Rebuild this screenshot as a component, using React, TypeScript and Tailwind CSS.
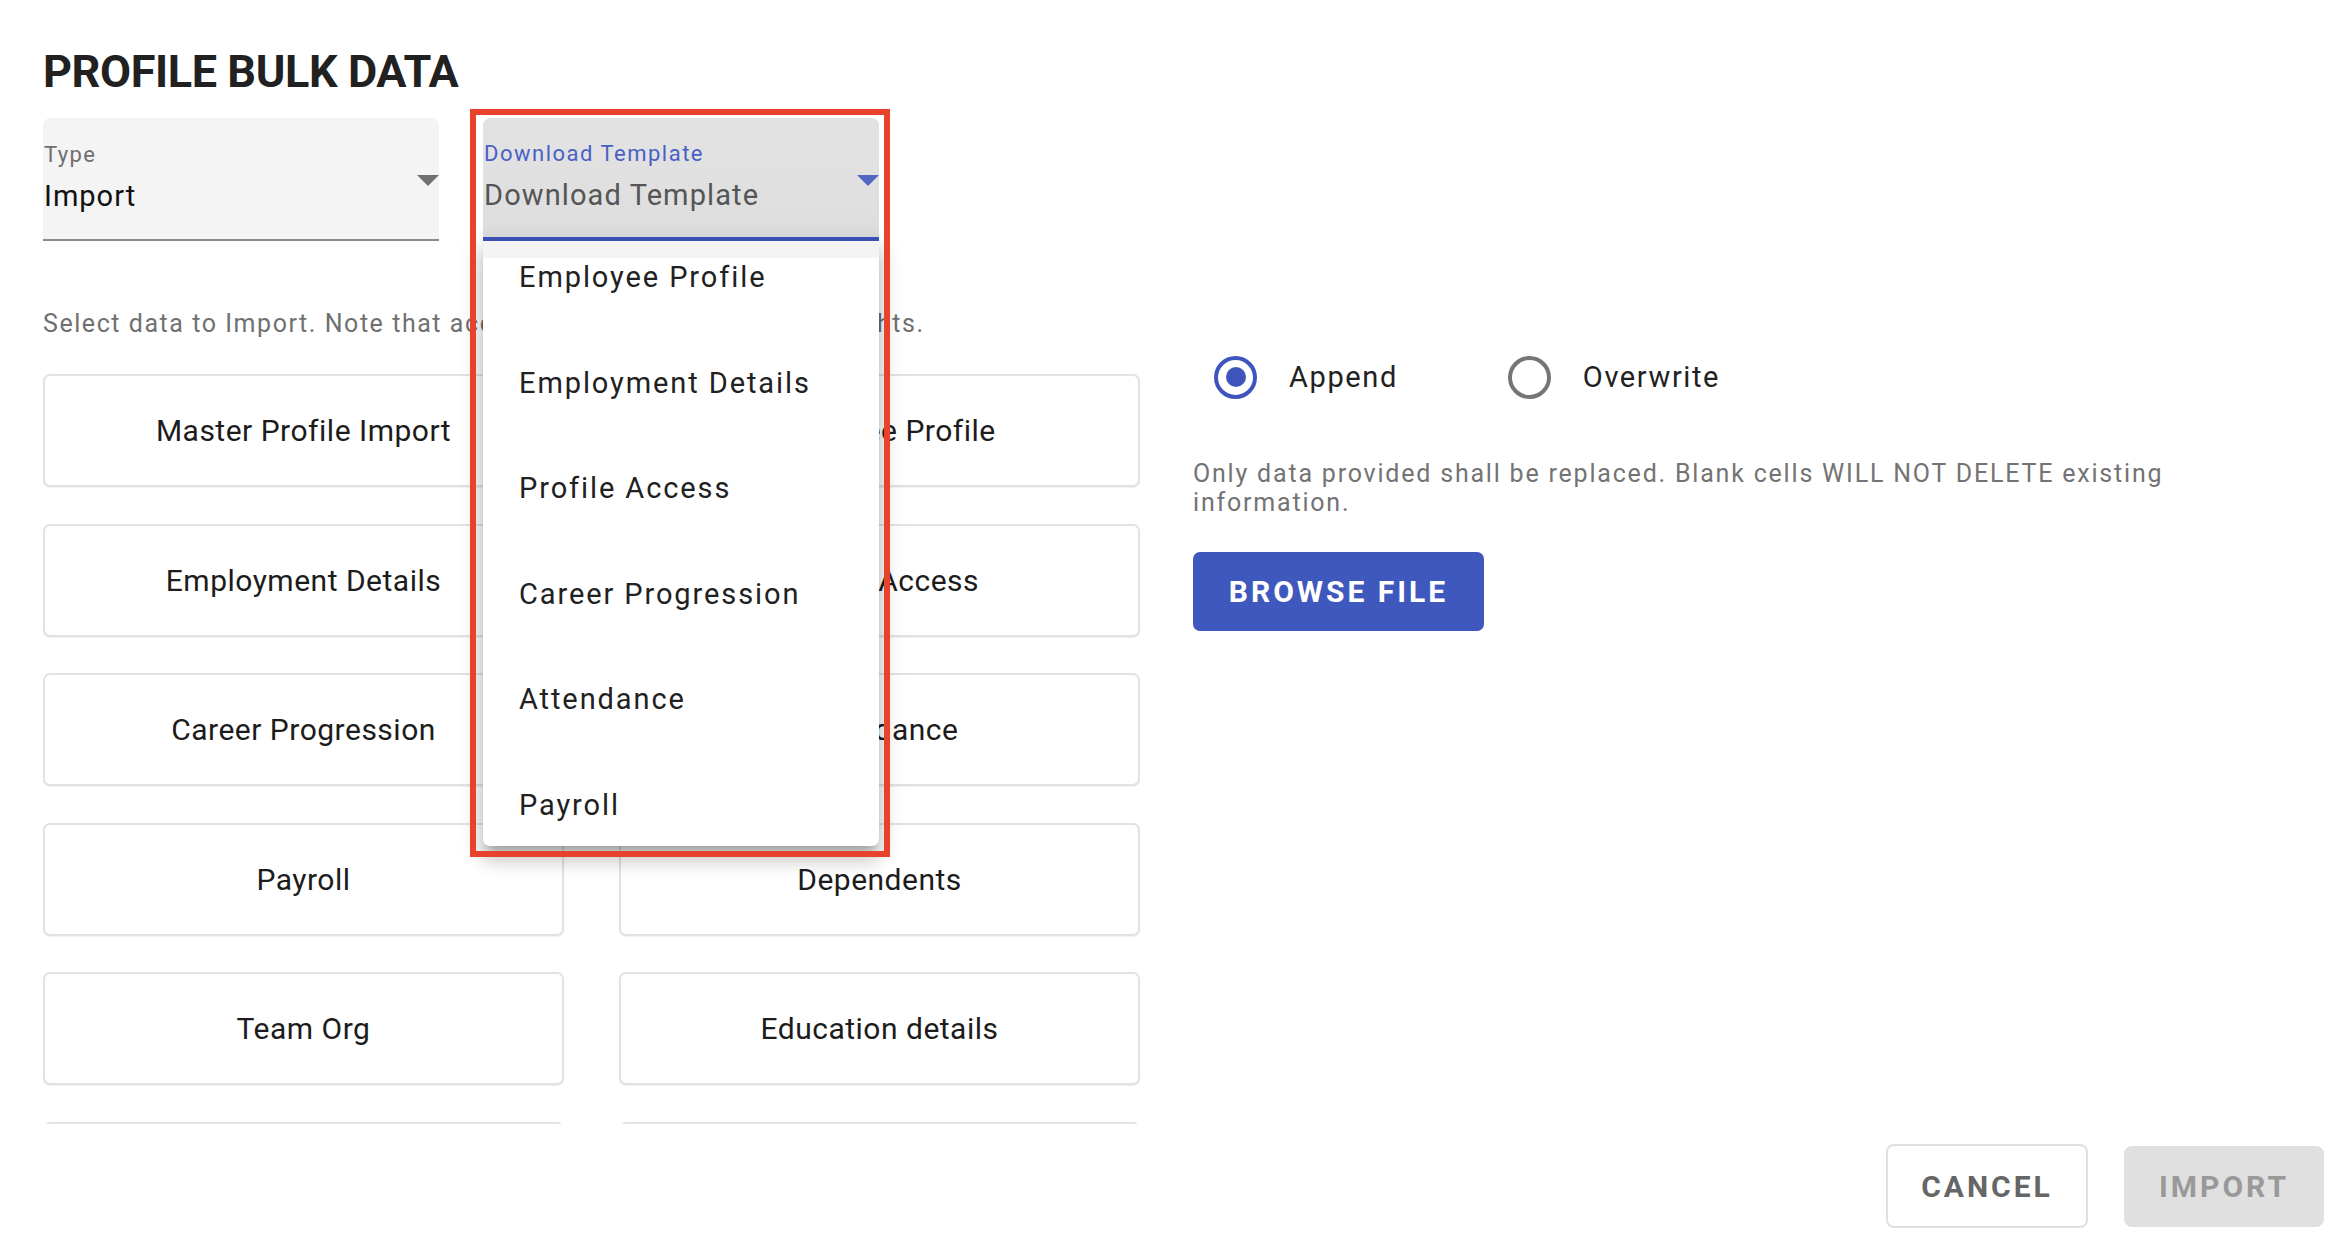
import { useState } from "react";

const cards = [
  "Master Profile Import",
  "Employee Profile",
  "Employment Details",
  "Profile Access",
  "Career Progression",
  "Attendance",
  "Payroll",
  "Dependents",
  "Team Org",
  "Education details",
  "",
  "",
];

const templates = [
  "Employee Profile",
  "Employment Details",
  "Profile Access",
  "Career Progression",
  "Attendance",
  "Payroll",
];

function Caret({ color }: { color: string }) {
  return (
    <svg width="22" height="11" viewBox="0 0 22 11" className="absolute right-0 top-[57px]">
      <polygon points="0,0 22,0 11,11" fill={color} />
    </svg>
  );
}

function Radio({ checked, label }: { checked: boolean; label: string }) {
  return (
    <label className="flex items-center">
      <span
        className={`flex h-[43px] w-[43px] items-center justify-center rounded-full border-[4px] ${
          checked ? "border-[#3f55bd]" : "border-[#757575]"
        }`}
      >
        {checked && <span className="h-[20px] w-[20px] rounded-full bg-[#3f55bd]" />}
      </span>
      <span className="ml-[32px] text-[29px] leading-[34px] tracking-[1.6px] text-[#212121]">{label}</span>
    </label>
  );
}

export default function App() {
  const [mode, setMode] = useState("append");

  return (
    <div className="relative h-[1240px] w-[2336px] overflow-hidden bg-white font-['Roboto',sans-serif]">
      <div className="pl-[43px] pt-[49px]">
        <h1 className="text-[45px] font-bold leading-[46px] tracking-[-0.4px] text-[#212121]">PROFILE BULK DATA</h1>

        <div className="mt-[23px] flex gap-[44px]">
          {/* Type select */}
          <div className="relative h-[123px] w-[396px] rounded-t-[7px] border-b-2 border-[#8a8a8a] bg-[#f4f4f4] pt-[26px] pl-[1px]">
            <div className="text-[22px] leading-[22px] tracking-[1.4px] text-[#6f6f6f]">Type</div>
            <div className="mt-[16px] text-[29px] leading-[29px] tracking-[1px] text-[#111111]">Import</div>
            <Caret color="#707070" />
          </div>

          {/* Download template select (open) */}
          <div className="relative">
            <div className="relative h-[123px] w-[396px] rounded-t-[7px] border-b-[4px] border-[#3f55bd] bg-gradient-to-b from-[#e3e3e3] to-[#dedede] pt-[25px] pl-[1px]">
              <div className="text-[22px] leading-[22px] tracking-[1.5px] text-[#4a5fc6]">Download Template</div>
              <div className="mt-[16px] text-[29px] leading-[29px] tracking-[1.1px] text-[#555555]">Download Template</div>
              <Caret color="#5266c4" />
            </div>

            <div className="absolute left-0 top-full z-10 h-[605px] w-[396px] overflow-hidden rounded-b-[7px] bg-white shadow-[0_9px_9px_-5px_rgba(0,0,0,0.2),0_14px_18px_2px_rgba(0,0,0,0.14),0_5px_24px_4px_rgba(0,0,0,0.12)]">
              <div className="h-[17px] bg-[#f4f4f4]" />
              {templates.map((t) => (
                <div key={t} className="h-[105.5px] pl-[36px] pt-[3px] text-[29px] leading-[32px] tracking-[1.9px] text-[#212121]">
                  {t}
                </div>
              ))}
            </div>

            <div className="pointer-events-none absolute left-[-13px] top-[-9px] z-20 h-[748px] w-[420px] border-[6px] border-[#e8422c]" />
          </div>
        </div>

        <div className="mt-[70px] flex">
          <div className="w-[1097px] shrink-0">
            <p className="text-[25px] leading-[25px] tracking-[1.55px] text-[#707070]">
              Select data to Import. Note that access is determined by user's rights.
            </p>
            <div className="mt-[38px] h-[750px] overflow-hidden">
              <div className="grid grid-cols-[521px_521px] auto-rows-[113px] gap-x-[55px] gap-y-[36.5px]">
                {cards.map((c, i) => (
                  <button
                    key={i}
                    className="flex items-center justify-center rounded-[7px] border-2 border-[#e2e2e2] bg-white text-[30px] tracking-[0.5px] text-[#1c1c1c] shadow-[0_1px_1px_rgba(0,0,0,0.06)]"
                  >
                    {c}
                  </button>
                ))}
              </div>
            </div>
          </div>

          <div className="flex-1 pl-[53px] pt-[44px]">
            <div className="flex h-[44px] items-center pl-[21px]">
              <div onClick={() => setMode("append")}>
                <Radio checked={mode === "append"} label="Append" />
              </div>
              <div className="ml-[110px]" onClick={() => setMode("overwrite")}>
                <Radio checked={mode === "overwrite"} label="Overwrite" />
              </div>
            </div>
            <p className="mt-[60px] w-[1100px] text-[25px] leading-[29px] tracking-[1.8px] text-[#737373]">
              Only data provided shall be replaced. Blank cells WILL NOT DELETE existing information.
            </p>
            <button className="mt-[35px] h-[79px] w-[291px] rounded-[7px] bg-[#3f58bd] text-[30px] font-bold tracking-[3px] text-white">
              BROWSE FILE
            </button>
          </div>
        </div>
      </div>

      <div className="mt-[20px] flex items-center justify-end gap-[36px] pr-[12px]">
        <button className="h-[84px] w-[202px] rounded-[8px] border-2 border-[#e0e0e0] bg-white text-[30px] font-bold tracking-[3px] text-[#666666]">
          CANCEL
        </button>
        <button className="h-[81px] w-[200px] rounded-[8px] bg-[#e0e0e0] text-[30px] font-bold tracking-[3px] text-[#999999]">
          IMPORT
        </button>
      </div>
    </div>
  );
}
